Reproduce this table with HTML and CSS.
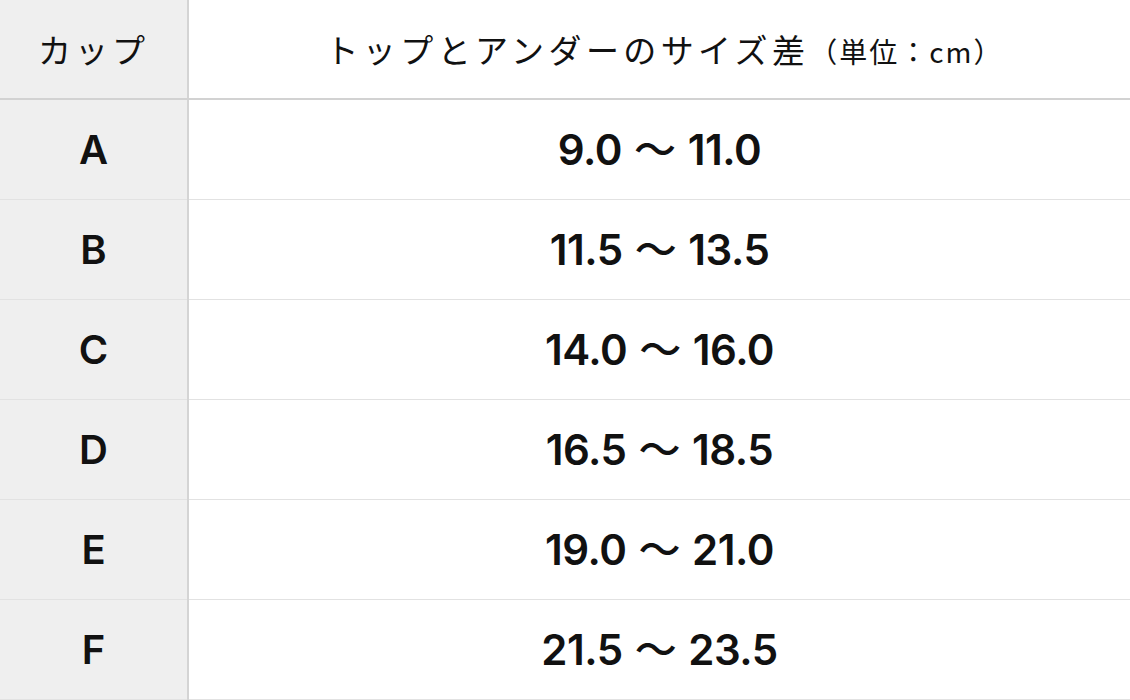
FILE: index.html
```html
<!DOCTYPE html>
<html lang="ja">
<head>
<meta charset="utf-8">
<link rel="stylesheet" href="styles.css">
</head>
<body>
<table class="size-table">
  <thead>
    <tr>
      <th class="cup-head">カップ</th>
      <th class="diff-head">トップとアンダーのサイズ差<span class="unit">（単位：cm）</span></th>
    </tr>
  </thead>
  <tbody>
    <tr><th class="cup">A</th><td class="range">9.0 <span class="wave">～</span> 11.0</td></tr>
    <tr><th class="cup">B</th><td class="range">11.5 <span class="wave">～</span> 13.5</td></tr>
    <tr><th class="cup">C</th><td class="range">14.0 <span class="wave">～</span> 16.0</td></tr>
    <tr><th class="cup">D</th><td class="range">16.5 <span class="wave">～</span> 18.5</td></tr>
    <tr><th class="cup">E</th><td class="range">19.0 <span class="wave">～</span> 21.0</td></tr>
    <tr><th class="cup">F</th><td class="range">21.5 <span class="wave">～</span> 23.5</td></tr>
  </tbody>
</table>
</body>
</html>
```

FILE: styles.css
```css
html, body {
  margin: 0;
  padding: 0;
  background: #fff;
}
.size-table {
  width: 1130px;
  border-collapse: collapse;
  table-layout: fixed;
  color: #111;
  font-family: "Noto Sans CJK JP", "Noto Sans", sans-serif;
}
.size-table th,
.size-table td {
  height: 99px;
  padding: 0;
  text-align: center;
  vertical-align: middle;
  border-bottom: 1px solid #e2e2e2;
}
.size-table thead th {
  border-bottom: 2px solid #d2d2d2;
  font-weight: 400;
  font-size: 33px;
  letter-spacing: 4px;
  height: 98px;
}
.cup-head,
.cup {
  width: 187px;
  background: #efefef;
  border-right: 2px solid #d4d4d4;
}
.size-table .diff-head {
  letter-spacing: 4.4px;
  padding-left: 10px;
}
.unit {
  font-size: 28px;
  letter-spacing: 2px;
}
.cup {
  font-family: "Inter", "Noto Sans", sans-serif;
  font-weight: 600;
  font-size: 40px;
}
.size-table .range {
  font-family: "Inter", "Noto Sans", sans-serif;
  font-weight: 600;
  font-size: 42px;
  line-height: 1;
  letter-spacing: -0.5px;
  height: 96px;
  padding-bottom: 3px;
}
.wave {
  font-family: "Noto Sans CJK JP", sans-serif;
  font-weight: 500;
  font-size: 42px;
  line-height: 1;
  margin: 0 2px;
}
```
